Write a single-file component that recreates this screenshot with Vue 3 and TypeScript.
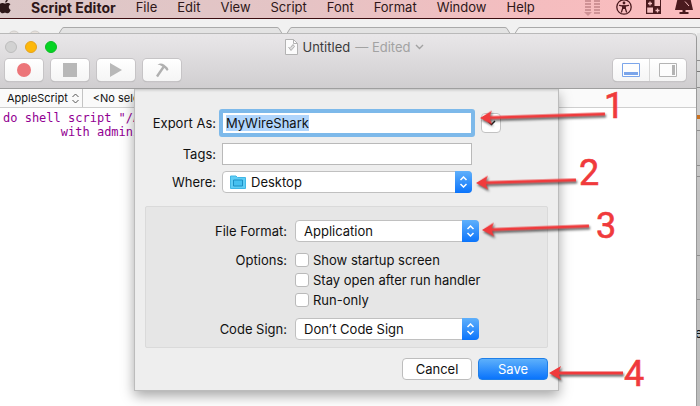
<script setup lang="ts">
import { ref } from 'vue'

const menus: string[] = ['File', 'Edit', 'View', 'Script', 'Font', 'Format', 'Window', 'Help']

const fileName = ref('MyWireShark')
const tags = ref('')
const location = ref('Desktop')
const fileFormat = ref('Application')
const codeSign = ref('Don’t Code Sign')

interface Option {
  id: string
  label: string
  checked: boolean
}
const options = ref<Option[]>([
  { id: 'startup', label: 'Show startup screen', checked: false },
  { id: 'stay-open', label: 'Stay open after run handler', checked: false },
  { id: 'run-only', label: 'Run-only', checked: false },
])

interface Callout {
  n: number
  tip: [number, number]
  tail: [number, number]
  text: [number, number]
}
const callouts: Callout[] = [
  { n: 1, tip: [480, 118], tail: [605, 114], text: [604, 118] },
  { n: 2, tip: [476, 183], tail: [576, 180], text: [579, 185] },
  { n: 3, tip: [482, 230], tail: [589, 226], text: [596, 238] },
  { n: 4, tip: [549, 373], tail: [623, 373], text: [624, 386] },
]

function arrowTransform(c: Callout): string {
  const dx = c.tail[0] - c.tip[0]
  const dy = c.tail[1] - c.tip[1]
  const angle = (Math.atan2(dy, dx) * 180) / Math.PI
  return `translate(${c.tip[0]} ${c.tip[1]}) rotate(${angle})`
}

function arrowPath(c: Callout): string {
  const len = Math.hypot(c.tail[0] - c.tip[0], c.tail[1] - c.tip[1])
  return `M0 0L12 -7L10 -1.500H${len}V1.500H10L12 7Z`
}
</script>

<template>
  <div class="screen">
    <header class="menubar">
      <svg class="apple" width="14" height="18" viewBox="0 0 14 18" aria-hidden="true">
        <path d="M7.2 2.6C7.2 1 8.3 -.3 9.8 -.6C10 1.1 8.7 2.6 7.2 2.6ZM10.8 7C10.8 5.700 11.500 4.800 12.500 4.200C11.700 3.200 10.600 2.900 9.700 2.900C8.500 2.900 7.800 3.600 7 3.600C6.200 3.600 5.300 2.900 4.200 2.900C2.400 2.900.7 4.500.7 7.200C.7 10.200 2.800 13.300 4.400 13.300C5.400 13.300 5.900 12.700 7 12.700C8.100 12.700 8.500 13.300 9.600 13.300C11 13.300 12.200 11.300 12.700 9.900C11.600 9.400 10.800 8.400 10.800 7Z" fill="#2e1718" />
      </svg>
      <nav class="menus">
        <a class="menu app-name" href="#">Script Editor</a>
        <a v-for="m in menus" :key="m" class="menu" href="#">{{ m }}</a>
      </nav>
      <div class="status">
        <svg width="18" height="18" viewBox="0 0 18 18" aria-hidden="true">
          <g fill="#cf9295">
            <path d="M1 0H7V2H1ZM1 3H7V5H1ZM1 6H7V8H1ZM1 9H7V11H1ZM0 12H8L4 16Z" />
            <path d="M10 0H16V2H10ZM10 3H16V5H10ZM10 6H16V8H10ZM10 9H16V11H10ZM10 12H16V14H10Z" />
          </g>
        </svg>
        <svg width="18" height="18" viewBox="0 0 18 18" aria-hidden="true">
          <circle cx="9" cy="7" r="7.200" fill="none" stroke="#4a1a1e" stroke-width="1.300" />
          <circle cx="9" cy="3" r="1.400" fill="#4a1a1e" />
          <path d="M4.500 5.400L7.800 6V8L6.500 12M13.500 5.400L10.200 6V8L11.500 12M7.800 6H10.200" fill="none" stroke="#4a1a1e" stroke-width="1.300" stroke-linecap="round" />
          <path d="M7.200 5.500H10.800V9H7.200Z" fill="#4a1a1e" />
        </svg>
        <svg width="16" height="18" viewBox="0 0 16 18" aria-hidden="true">
          <path d="M0 -1H15V14H0Z" fill="#4a1a1e" />
          <path d="M8.500 0H14V6H8.500ZM1.200 7.500H7V12.800H1.200Z" fill="#f6bfc1" />
          <path d="M2 3.500H6M4 1.500V5.500M9.500 10.500H13.500M11.500 8.500V12.500" stroke="#f6bfc1" stroke-width="1.300" />
        </svg>
        <svg width="18" height="18" viewBox="0 0 18 18" aria-hidden="true">
          <path d="M2.500 -1H15.500L18 10H0Z" fill="#4a1a1e" />
          <path d="M10 1.500L14 6" stroke="#f6bfc1" stroke-width="1" />
          <path d="M7.500 10H10.500V12H13.500V14H4.500V12H7.500Z" fill="#4a1a1e" />
        </svg>
      </div>
    </header>

    <div class="browser-tabs" aria-hidden="true">
      <svg width="100%" height="14">
        <circle cx="14" cy="18" r="6" fill="#e6e2df" stroke="#d0cdca" />
        <circle cx="35" cy="18" r="6" fill="#e9e2dc" stroke="#d0cdca" />
        <g fill="#e3e3e3" stroke="#a9a9a9">
          <path d="M59 14.500L62 9.500Q63 8.500 64 8.500H277Q278 8.500 279 9.500L282 14.500" />
          <path d="M287 14.500L290 9.500Q291 8.500 292 8.500H505Q506 8.500 507 9.500L510 14.500" />
          <path d="M515 14.500L518 9.500Q519 8.500 520 8.500H2000" fill="#f1f1f1" />
        </g>
      </svg>
    </div>

    <div class="desk">
      <main class="window">
        <div class="chrome">
          <div class="title-row">
            <div class="lights">
              <button class="light close" aria-label="Close"></button>
              <button class="light minimise" aria-label="Minimise"></button>
              <button class="light zoom" aria-label="Zoom"></button>
            </div>
            <h1 class="title">
              <svg width="13" height="16" viewBox="0 0 13 16" aria-hidden="true">
                <path d="M.5 .5H8.500L12.500 4.500V15.500H.5Z" fill="#fbfbfb" stroke="#b3b3b3" />
                <path d="M8.500 .5V4.500H12.500" fill="none" stroke="#b3b3b3" />
                <path d="M3.500 8L6 11.500L9.500 7.500L8 5.500L5.500 8.500" fill="#dcdcdc" stroke="#b0b0b0" />
              </svg>
              <span>Untitled</span>
              <span class="edited">— Edited</span>
              <svg class="chev" width="9" height="6" viewBox="0 0 9 6" aria-hidden="true">
                <path d="M1 1L4.500 4.500L8 1" fill="none" stroke="#a2a2a2" stroke-width="1.400" />
              </svg>
            </h1>
          </div>
          <div class="tool-row">
            <button class="tool" aria-label="Record">
              <svg width="38" height="22" viewBox="0 0 38 22"><circle cx="19" cy="11" r="7" fill="#ec7579" /></svg>
            </button>
            <button class="tool" aria-label="Stop">
              <svg width="38" height="22" viewBox="0 0 38 22"><path d="M12 4H26V18H12Z" fill="#b8b8b8" /></svg>
            </button>
            <button class="tool" aria-label="Run">
              <svg width="38" height="22" viewBox="0 0 38 22"><path d="M13 4L25 11L13 18Z" fill="#b8b8b8" /></svg>
            </button>
            <button class="tool" aria-label="Compile">
              <svg width="38" height="22" viewBox="0 0 38 22">
                <path d="M14 17.500L20.500 8" stroke="#b0b0b0" stroke-width="2.400" />
                <path d="M14.500 5.500Q18 3.500 21 5.500L24.500 8.500L25.500 10.500L24 12L22 9.500L18.500 7Q17 5.500 14.500 5.500Z" fill="#b0b0b0" />
              </svg>
            </button>
            <div class="segments">
              <button class="segment" aria-label="Show log">
                <svg width="18" height="14" viewBox="0 0 18 14">
                  <path d="M.5 .5H17.500V13.500H.5Z" fill="#fdfdfd" stroke="#7ba5ea" />
                  <path d="M2 9H16V12H2Z" fill="#7ba5ea" />
                </svg>
              </button>
              <button class="segment" aria-label="Show sidebar">
                <svg width="18" height="14" viewBox="0 0 18 14">
                  <path d="M.5 .5H17.500V13.500H.5Z" fill="#fdfdfd" stroke="#b4b4b4" />
                  <path d="M13 2H16V12H13Z" fill="#b4b4b4" />
                </svg>
              </button>
            </div>
          </div>
        </div>

        <div class="content">
          <div class="navbar">
            <button class="nav-item language">
              AppleScript
              <svg width="7" height="11" viewBox="0 0 7 11" aria-hidden="true">
                <path d="M.5 4L3.500 1L6.500 4M.5 7L3.500 10L6.500 7" fill="none" stroke="#555" />
              </svg>
            </button>
            <button class="nav-item">&lt;No sele</button>
          </div>
          <pre class="code">do shell script "/A
        with admini</pre>

          <form class="sheet" @submit.prevent>
            <div class="fields">
              <label for="name">Export As:</label>
              <div class="name-line">
                <div class="name-box">
                  <input id="name" v-model="fileName" class="name-input" type="text" :size="fileName.length" />
                </div>
                <button class="expand" type="button" aria-label="Expand">
                  <svg width="9" height="6" viewBox="0 0 9 6"><path d="M1 1L4.500 4.500L8 1" fill="none" stroke="#222" stroke-width="1.500" /></svg>
                </button>
              </div>

              <label for="tags">Tags:</label>
              <input id="tags" v-model="tags" class="tags" type="text" />

              <label for="where">Where:</label>
              <div class="popup where">
                <select id="where" v-model="location" class="with-icon">
                  <option>Desktop</option>
                </select>
                <svg class="folder" width="16" height="14" viewBox="0 0 16 14" aria-hidden="true">
                  <path d="M.5 1H6L7.500 2.500H15.500V13.500H.5Z" fill="#5fcdf5" stroke="#3fb6e6" />
                  <path d="M3.500 5H12.500V11H3.500Z" fill="#45c0f0" stroke="#1d8fc4" />
                </svg>
                <span class="cap" aria-hidden="true">
                  <svg width="9" height="12" viewBox="0 0 9 12"><path d="M1.500 4L4.500 1L7.500 4M1.500 8L4.500 11L7.500 8" /></svg>
                </span>
              </div>
            </div>

            <div class="panel">
              <label for="format">File Format:</label>
              <div class="popup">
                <select id="format" v-model="fileFormat">
                  <option>Application</option>
                </select>
                <span class="cap" aria-hidden="true">
                  <svg width="9" height="12" viewBox="0 0 9 12"><path d="M1.500 4L4.500 1L7.500 4M1.500 8L4.500 11L7.500 8" /></svg>
                </span>
              </div>

              <span id="options-label" class="options-label">Options:</span>
              <div class="options" role="group" aria-labelledby="options-label">
                <label v-for="o in options" :key="o.id" class="option" :for="o.id">
                  <input :id="o.id" v-model="o.checked" type="checkbox" />
                  {{ o.label }}
                </label>
              </div>

              <label for="sign">Code Sign:</label>
              <div class="popup">
                <select id="sign" v-model="codeSign">
                  <option>Don’t Code Sign</option>
                </select>
                <span class="cap" aria-hidden="true">
                  <svg width="9" height="12" viewBox="0 0 9 12"><path d="M1.500 4L4.500 1L7.500 4M1.500 8L4.500 11L7.500 8" /></svg>
                </span>
              </div>
            </div>

            <div class="actions">
              <button class="btn" type="button">Cancel</button>
              <button class="btn primary" type="submit">Save</button>
            </div>
          </form>
        </div>
      </main>
      <aside class="behind"><span class="fragment">e</span></aside>
    </div>

    <svg class="callouts" width="700" height="406" viewBox="0 0 700 406">
      <g v-for="c in callouts" :key="c.n">
        <g class="arrow" :transform="arrowTransform(c)">
          <path :d="arrowPath(c)" />
        </g>
        <text class="number" :x="c.text[0]" :y="c.text[1]">{{ c.n }}</text>
      </g>
    </svg>
  </div>
</template>

<style>
body {
  margin: 0;
}
</style>

<style scoped>
.screen {
  position: relative;
  display: flex;
  flex-direction: column;
  min-height: 100vh;
  overflow: hidden;
  background: #f1f1f1;
  color: #111;
  font: 13px/16px Inter, "Liberation Sans", sans-serif;
}
.screen * {
  box-sizing: border-box;
}
button,
input,
select {
  margin: 0;
  padding: 0;
  border: 0;
  color: inherit;
  font: inherit;
}

.menubar {
  display: flex;
  align-items: flex-start;
  height: 19px;
  padding: 0 7px 0 0;
  border-bottom: 1px solid #3c0d10;
  background: linear-gradient(90deg, #dcc8c8 0%, #e4c4c5 40%, #f4bdbf 75%, #fcbcbe 100%);
}
.apple {
  flex: none;
  margin-left: -2px;
}
.menus {
  display: flex;
  gap: 20px;
  margin-left: 19px;
}
.menu {
  color: #2e1718;
  line-height: 15px;
  text-decoration: none;
}
.app-name {
  font-size: 14px;
  font-weight: 700;
}
.status {
  display: flex;
  gap: 13px;
  margin-left: auto;
}

.browser-tabs {
  height: 14px;
  overflow: hidden;
}
.browser-tabs svg {
  display: block;
}

.desk {
  display: flex;
  flex: 1;
}
.window {
  display: flex;
  flex: 1;
  flex-direction: column;
  min-width: 0;
  border-right: 1px solid #9a9a9a;
  border-top-right-radius: 5px;
  background: #fff;
}
.chrome {
  height: 56px;
  border-top: 1px solid #b9b9b9;
  border-bottom: 1px solid #9f9f9f;
  border-top-right-radius: 5px;
  background: linear-gradient(#e9e7e9, #d0ced0);
}
.title-row {
  display: grid;
  grid-template-columns: 1fr auto 1fr;
  align-items: center;
  height: 25px;
  padding-left: 5px;
}
.lights {
  display: flex;
  gap: 8px;
}
.light {
  width: 12px;
  height: 12px;
  border: 1px solid #bdbdbd;
  border-radius: 50%;
  background: #d2d2d2;
}
.minimise {
  border-color: #e5a21c;
  background: #fdb80a;
}
.zoom {
  border-color: #0dbb25;
  background: #06d423;
}
.title {
  display: flex;
  align-items: center;
  gap: 5px;
  margin: 0;
  padding-left: 8px;
  color: #3b3b3b;
  font-size: 13px;
  font-weight: 400;
}
.edited {
  color: #a2a2a2;
}
.tool-row {
  display: flex;
  gap: 8px;
  padding: 0 10px 0 5px;
}
.tool,
.segments {
  overflow: hidden;
  border-radius: 4px;
  background: linear-gradient(#fff, #f5f5f5);
  box-shadow: 0 0 0 1px #c6c4c6, 0 1px 1px #a9a7a9;
}
.tool {
  width: 38px;
  height: 22px;
}
.tool svg {
  display: block;
}
.segments {
  display: flex;
  margin-left: auto;
}
.segment {
  display: grid;
  place-items: center;
  width: 36px;
  height: 22px;
  background: none;
}
.segment + .segment {
  width: 37px;
  border-left: 1px solid #d8d8d8;
}

.content {
  position: relative;
  flex: 1;
  overflow: hidden;
}
.navbar {
  display: flex;
  height: 19px;
  border-bottom: 1px solid #cfcfcf;
  background: #fafafa;
}
.nav-item {
  padding: 0 10px;
  background: none;
  font-size: 11px;
  line-height: 18px;
}
.language {
  display: flex;
  align-items: center;
  gap: 4px;
  padding: 0 3px 0 7px;
  border-right: 1px solid #c4c4c4;
}
.code {
  margin: 0;
  padding: 3px;
  color: #920092;
  font: 12px/14px "DejaVu Sans Mono", monospace;
}

.sheet {
  position: absolute;
  top: 0;
  right: 3px;
  left: 0;
  width: 425px;
  max-width: 100%;
  margin: 0 auto;
  padding: 20px 10px 10px;
  border: 1px solid #bcbcbc;
  border-top: 0;
  background: #eee;
  box-shadow: 0 5px 12px rgb(0 0 0 / 35%), inset 0 3px 3px -2px rgb(0 0 0 / 20%);
}
.fields {
  display: grid;
  grid-template-columns: 71px 1fr;
  column-gap: 6px;
  row-gap: 6px;
  align-items: center;
}
.fields > label,
.panel > label,
.options-label {
  text-align: right;
  white-space: nowrap;
}
.name-line {
  display: flex;
  align-items: center;
  gap: 6px;
  margin-left: -3px;
}
.name-box {
  width: 256px;
  height: 28px;
  padding: 2px 3px;
  border: 4px solid #7db9ea;
  border-radius: 3px;
  background: #fff;
}
.name-input {
  display: block;
  width: auto;
  height: 16px;
  max-width: 100%;
  outline: 0;
  background: #b0d5fc;
  field-sizing: content;
}
.expand {
  display: grid;
  place-items: center;
  width: 20px;
  height: 20px;
  border: 1px solid #c2c2c2;
  border-radius: 4px;
  background: #fff;
}
.tags {
  width: 250px;
  height: 22px;
  padding: 0 4px;
  border: 1px solid #b9b9b9;
  background: #fff;
}
.popup {
  display: grid;
  align-items: center;
  width: 184px;
  height: 22px;
}
.where {
  width: 250px;
}
.popup > * {
  grid-area: 1 / 1;
}
.popup select {
  width: 100%;
  height: 22px;
  padding: 0 24px 0 8px;
  border: 1px solid #c0c0c0;
  border-radius: 4px;
  appearance: none;
  background: #fff;
}
.popup .with-icon {
  padding-left: 28px;
}
.folder {
  margin-left: 8px;
}
.cap {
  display: grid;
  justify-self: end;
  place-items: center;
  width: 17px;
  height: 22px;
  border-radius: 0 4px 4px 0;
  background: linear-gradient(#5fb0fb, #0b74fb);
  pointer-events: none;
}
.cap path {
  fill: none;
  stroke: #fff;
  stroke-width: 1.5;
}

.panel {
  display: grid;
  grid-template-columns: 141px 1fr;
  column-gap: 8px;
  row-gap: 10px;
  align-items: center;
  margin-top: 13px;
  padding: 13px 0 7px;
  border: 1px solid #dadada;
  border-radius: 2px;
  background: #e6e6e6;
}
.options-label {
  align-self: start;
  line-height: 16px;
}
.options {
  display: grid;
  gap: 4px;
}
.option {
  display: flex;
  align-items: center;
  gap: 4px;
}
.option input {
  width: 14px;
  height: 14px;
  border: 1px solid #bababa;
  border-radius: 3px;
  appearance: none;
  background: #fff;
}
.option input:checked {
  background: #2f8bfb;
}
.actions {
  display: flex;
  justify-content: flex-end;
  gap: 6px;
  margin-top: 10px;
}
.btn {
  width: 70px;
  height: 22px;
  border: 1px solid #bdbdbd;
  border-radius: 4px;
  background: #fff;
}
.primary {
  border-color: #1f7fe8;
  background: linear-gradient(#5db0fb, #0a74fc);
  color: #fff;
}

.behind {
  position: relative;
  width: 3px;
  overflow: hidden;
  background:
    linear-gradient(#8e8e8e, #8e8e8e) 0 27px / 3px 1px no-repeat,
    linear-gradient(#777, #777) 0 38px / 3px 1px no-repeat,
    linear-gradient(#8e8e8e, #8e8e8e) 0 54px / 3px 1px no-repeat,
    linear-gradient(#c9701f, #c9701f) 0 82px / 3px 4px no-repeat,
    linear-gradient(#8e8e8e, #8e8e8e) 0 97px / 3px 1px no-repeat,
    linear-gradient(#8e8e8e, #8e8e8e) 0 132px / 3px 1px no-repeat,
    linear-gradient(#8e8e8e, #8e8e8e) 0 143px / 3px 1px no-repeat,
    linear-gradient(#8e8e8e, #8e8e8e) 0 222px / 3px 1px no-repeat,
    linear-gradient(#8e8e8e, #8e8e8e) 0 266px / 3px 1px no-repeat,
    linear-gradient(#e6e6e6, #d2d2d2 60px, #c2c2c2 160px, #bcbcbc);
}
.fragment {
  position: absolute;
  top: 292px;
  left: -2px;
  font-size: 13px;
}

.callouts {
  position: absolute;
  top: 0;
  left: 0;
  overflow: visible;
  pointer-events: none;
}
.arrow {
  fill: #f03a3c;
  filter: drop-shadow(1px 2px 1px rgb(0 0 0 / 60%));
}
.number {
  fill: #f03a3c;
  font: 36px Roboto, "Liberation Sans", sans-serif;
  stroke: #f03a3c;
  stroke-width: 0.6;
}
</style>
